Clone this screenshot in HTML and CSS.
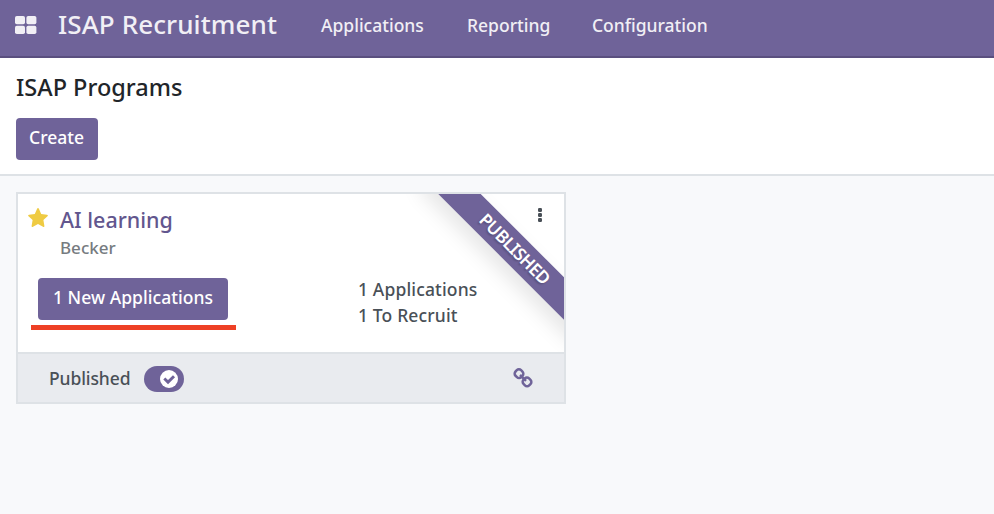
FILE: index.html
```html
<!DOCTYPE html>
<html lang="en">
<head>
<meta charset="utf-8">
<title>ISAP Recruitment</title>
<link rel="stylesheet" href="styles.css">
</head>
<body>
<header class="navbar">
  <svg class="apps" viewBox="0 0 22 18" fill="currentColor"><rect width="10" height="8.2" rx="1.8"/><rect x="11.4" width="10" height="8.2" rx="1.8"/><rect y="9.8" width="10" height="8.2" rx="1.8"/><rect x="11.4" y="9.8" width="10" height="8.2" rx="1.8"/></svg>
  <span class="brand">ISAP Recruitment</span>
  <nav class="menu"><a class="m-app">Applications</a><a class="m-rep">Reporting</a><a class="m-conf">Configuration</a></nav>
</header>
<section class="control">
  <h1 class="heading">ISAP Programs</h1>
  <button class="btn create">Create</button>
</section>
<main class="content">
  <article class="card">
    <div class="body">
      <div class="ribbon"><span class="band"><span class="band-text">PUBLISHED</span></span></div>
      <svg class="dots" viewBox="0 0 4 14" fill="currentColor"><rect width="4" height="4" rx="1.2"/><rect y="5" width="4" height="4" rx="1.2"/><rect y="10" width="4" height="4" rx="1.2"/></svg>
      <div class="top">
        <svg class="star" viewBox="0 0 20 19" fill="currentColor"><path d="M10 0Q10.6 0 10.9.7L13.2 6 18.9 6.8Q20.5 7.2 19.5 8.2L15.400 12.100 16.400 17.900Q16.400 19.500 15 18.800L10 16.100 5 18.800Q3.600 19.500 3.600 17.900L4.600 12.100.5 8.200Q-.5 7.200 1.100 6.800L6.800 6 9.100.7Q9.400 0 10 0Z"/></svg>
        <div class="names"><div class="title">AI learning</div><div class="sub">Becker</div></div>
      </div>
      <div class="row">
        <div class="action"><button class="btn new">1 New Applications</button><div class="underline"></div></div>
        <div class="stats"><div class="s-app">1 Applications</div><div class="s-rec">1 To Recruit</div></div>
      </div>
    </div>
    <footer class="foot">
      <span class="status">Published</span>
      <span class="toggle"><svg class="knob" viewBox="0 0 18 18"><circle cx="9" cy="9" r="9" fill="#fff"/><path d="M4.300 8.500 8 12.100 14 6.200" fill="none" stroke="#6f6399" stroke-width="2.900"/></svg></span>
      <svg class="link" viewBox="0 0 20 20" fill="none" stroke="currentColor" stroke-width="2.500"><rect x="2" y="1.800" width="8" height="7.800" rx="3" transform="rotate(45 6 5.700)"/><rect x="10" y="10" width="8" height="7.800" rx="3" transform="rotate(45 14 13.900)"/><path d="M7 7 13 12.800"/></svg>
    </footer>
  </article>
</main>
</body>
</html>
```
FILE: styles.css
```css
* { box-sizing: border-box; }
body { margin: 0; height: 514px; overflow: hidden; background: #f8f9fb; color: #495057; font: 18px/26px "Noto Sans", sans-serif; white-space: nowrap; }
svg { display: block; flex: none; }
.navbar { display: flex; height: 58px; padding-left: 15px; background: #6f6399; border-bottom: 2px solid #5a4f7f; color: #f1eff5; }
.apps { width: 22px; height: 18px; margin-top: 16px; }
.brand { width: 261px; margin-left: 21px; font-size: 26px; font-weight: 500; line-height: 49px; letter-spacing: .1px; }
.menu { display: flex; line-height: 51px; font-weight: 500; font-size: 17.500px; }
.m-app { width: 146px; margin-left: 2px; }
.m-rep { width: 125px; }
.control { height: 118px; padding: 16px; background: #fff; border-bottom: 2px solid #dee2e6; }
.heading { margin: 0; font-size: 23.500px; font-weight: 500; line-height: 26px; color: #212529; }
.btn { display: block; height: 42px; padding: 0 0 3px; border: 0; border-radius: 4px; background: #6f6399; color: #fff; font: 500 17.500px/39px "Noto Sans", sans-serif; white-space: nowrap; text-align: center; }
.create { width: 82px; margin-top: 18px; padding-right: 1px; }
.new { letter-spacing: .05px; }
.content { padding: 16px; }
.card { width: 550px; height: 212px; border: 2px solid #dee2e6; background: #fff; }
.body { position: relative; height: 158px; padding: 13px 10px 0; }
.top { display: flex; height: 71px; }
.star { width: 20px; height: 19px; margin-top: 1px; color: #efcb43; }
.names { margin-left: 12px; }
.title { margin-top: -1px; font-size: 21.500px; font-weight: 500; line-height: 27px; color: #62568e; }
.sub { margin-top: 1px; font-size: 17px; font-weight: 500; line-height: 27px; color: #767b80; }
.row { display: flex; }
.action { width: 330px; padding-left: 10px; }
.new { width: 190px; }
.underline { width: 205px; height: 5px; margin: 5px 0 0 -7px; background: #ee4025; }
.stats { margin-top: -2px; line-height: 26px; font-size: 17.500px; font-weight: 500; letter-spacing: .15px; }
.ribbon { position: absolute; top: 0; right: 0; width: 160px; height: 158px; overflow: hidden; }
.band { position: absolute; left: -2px; top: 40px; width: 225px; height: 30px; transform: rotate(45deg); background: #6f6399; box-shadow: 0 10px 20px rgba(0,0,0,.1); color: #fff; text-align: center; font-size: 17.500px; font-weight: 600; line-height: 29px; letter-spacing: -.6px; text-shadow: 0 2px 2px rgba(0,0,0,.2); }
.dots { position: absolute; left: 520px; top: 14px; width: 4px; height: 14px; color: #495057; }
.foot { display: flex; align-items: center; height: 50px; padding-left: 31px; border-top: 2px solid #dee2e6; background: #e9ebef; font-size: 17.500px; }
.status { width: 95px; margin-top: -1px; font-weight: 500; letter-spacing: -.1px; }
.toggle { width: 40px; height: 26px; margin-top: 1px; padding: 4px 0 0 16px; border-radius: 13px; background: #6f6399; }
.knob { width: 18px; height: 18px; }
.link { width: 20px; height: 20px; margin-left: 329px; color: #6f6399; }
```
